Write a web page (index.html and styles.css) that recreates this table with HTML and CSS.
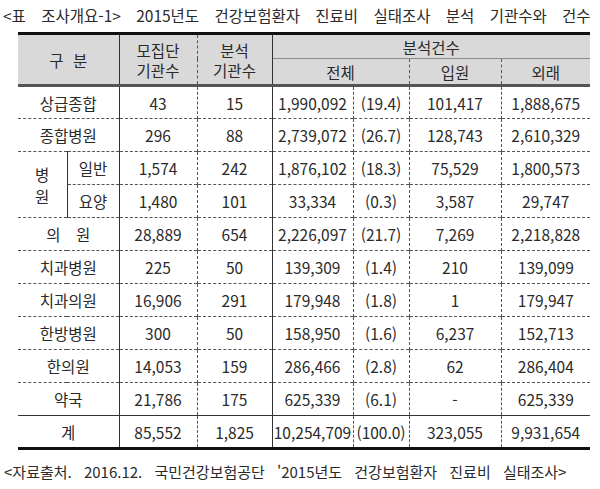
FILE: index.html
```html
<!DOCTYPE html>
<html lang="ko">
<head>
<meta charset="utf-8">
<link rel="stylesheet" href="styles.css">
</head>
<body>
<div class="page">
  <div class="title">&lt;표 조사개요-1&gt; 2015년도 건강보험환자 진료비 실태조사 분석 기관수와 건수</div>
  <table class="tbl">
    <colgroup>
      <col class="c0a"><col class="c0b"><col class="c1"><col class="c2"><col class="c3a"><col class="c3b"><col class="c4"><col class="c5">
    </colgroup>
    <thead>
      <tr class="h1">
        <th colspan="2" rowspan="2" class="spaced">구 분</th>
        <th rowspan="2" class="sl two">모집단<br>기관수</th>
        <th rowspan="2" class="dl two">분석<br>기관수</th>
        <th colspan="4" class="sl sub">분석건수</th>
      </tr>
      <tr class="h2">
        <th colspan="2" class="sl">전체</th>
        <th class="dl">입원</th>
        <th class="dl">외래</th>
      </tr>
    </thead>
    <tbody>
      <tr><td colspan="2">상급종합</td><td class="sl">43</td><td class="dl">15</td><td class="sl">1,990,092</td><td class="dl">(19.4)</td><td class="dl">101,417</td><td class="dl">1,888,675</td></tr>
      <tr><td colspan="2">종합병원</td><td class="sl">296</td><td class="dl">88</td><td class="sl">2,739,072</td><td class="dl">(26.7)</td><td class="dl">128,743</td><td class="dl">2,610,329</td></tr>
      <tr><td rowspan="2" class="vert">병<br>원</td><td class="sl">일반</td><td class="sl">1,574</td><td class="dl">242</td><td class="sl">1,876,102</td><td class="dl">(18.3)</td><td class="dl">75,529</td><td class="dl">1,800,573</td></tr>
      <tr><td class="sl">요양</td><td class="sl">1,480</td><td class="dl">101</td><td class="sl">33,334</td><td class="dl">(0.3)</td><td class="dl">3,587</td><td class="dl">29,747</td></tr>
      <tr><td colspan="2" class="wide">의 원</td><td class="sl">28,889</td><td class="dl">654</td><td class="sl">2,226,097</td><td class="dl">(21.7)</td><td class="dl">7,269</td><td class="dl">2,218,828</td></tr>
      <tr><td colspan="2">치과병원</td><td class="sl">225</td><td class="dl">50</td><td class="sl">139,309</td><td class="dl">(1.4)</td><td class="dl">210</td><td class="dl">139,099</td></tr>
      <tr><td colspan="2">치과의원</td><td class="sl">16,906</td><td class="dl">291</td><td class="sl">179,948</td><td class="dl">(1.8)</td><td class="dl">1</td><td class="dl">179,947</td></tr>
      <tr><td colspan="2">한방병원</td><td class="sl">300</td><td class="dl">50</td><td class="sl">158,950</td><td class="dl">(1.6)</td><td class="dl">6,237</td><td class="dl">152,713</td></tr>
      <tr><td colspan="2">한의원</td><td class="sl">14,053</td><td class="dl">159</td><td class="sl">286,466</td><td class="dl">(2.8)</td><td class="dl">62</td><td class="dl">286,404</td></tr>
      <tr><td colspan="2">약국</td><td class="sl">21,786</td><td class="dl">175</td><td class="sl">625,339</td><td class="dl">(6.1)</td><td class="dl">-</td><td class="dl">625,339</td></tr>
      <tr class="total"><td colspan="2">계</td><td class="sl">85,552</td><td class="dl">1,825</td><td class="sl">10,254,709</td><td class="dl">(100.0)</td><td class="dl">323,055</td><td class="dl">9,931,654</td></tr>
    </tbody>
  </table>
  <div class="source">&lt;자료출처. 2016.12. 국민건강보험공단 '2015년도 건강보험환자 진료비 실태조사&gt;</div>
</div>
</body>
</html>
```

FILE: styles.css
```css
html, body {
  margin: 0;
  padding: 0;
  background: #ffffff;
}
body {
  font-family: "Noto Sans CJK KR", "Noto Sans", sans-serif;
  color: #2a2a2a;
}
.page {
  width: 600px;
  height: 489px;
  padding-top: 4px;
  box-sizing: border-box;
}
.title {
  font-size: 15.5px;
  line-height: 22px;
  padding-left: 3px;
  word-spacing: 11px;
  white-space: nowrap;
  height: 28px;
}
.tbl {
  margin-left: 18px;
  width: 572px;
  table-layout: fixed;
  border-collapse: collapse;
  border-top: 3px solid #111111;
  border-bottom: 3px solid #111111;
  font-size: 15.5px;
}
.c0a { width: 49px; }
.c0b { width: 52px; }
.c1 { width: 78px; }
.c2 { width: 75px; }
.c3a { width: 81px; }
.c3b { width: 56px; }
.c4 { width: 92px; }
.c5 { width: 89px; }
th, td {
  padding: 0;
  text-align: center;
  vertical-align: middle;
  font-weight: normal;
  white-space: nowrap;
  line-height: 20px;
}
.spaced { word-spacing: 5px; }
.wide { word-spacing: 11px; }
thead th {
  background: #d9d9d9;
}
.h1 { height: 25px; }
.h2 { height: 27px; }
.h2 th {
  border-top: 1px solid #8a8a8a;
  border-bottom: 3px solid #555555;
}
.h1 th[rowspan="2"] {
  border-bottom: 3px solid #555555;
}
tbody tr { height: 33px; }
tbody td {
  border-top: 1px dashed #555555;
}
tbody tr.total td {
  border-top: 1px solid #333333;
}
.sl { border-left: 1px solid #333333; }
.dl { border-left: 1px dashed #555555; }
.vert {
  line-height: 22px;
}
.source {
  font-size: 15px;
  line-height: 20px;
  padding-left: 4px;
  margin-top: 12px;
  letter-spacing: 0;
  word-spacing: 8px;
  white-space: nowrap;
}
```
